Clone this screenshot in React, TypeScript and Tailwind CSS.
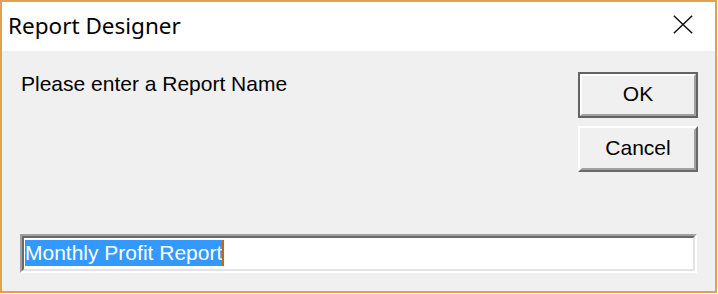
import React from "react";

export default function App() {
  const sans = { fontFamily: '"Liberation Sans", Arial, sans-serif' };
  return (
    <div className="w-[718px] h-[294px] bg-white">
      <div className="w-[717px] h-[293px] border-2 border-[#e3a14f] flex flex-col bg-[#f0f0f0]">
        {/* Title bar */}
        <div className="h-[49px] bg-white flex items-start justify-between">
          <div
            className="pt-[9px] pl-[6px] text-[22.5px] leading-[30px] text-black"
            style={{ fontFamily: '"Noto Sans", "Open Sans", sans-serif' }}
          >
            Report Designer
          </div>
          <svg
            width="20"
            height="19"
            viewBox="0 0 20 19"
            className="mt-[13px] mr-[22px]"
          >
            <path d="M0.8 0.8 L19.2 18.2 M19.2 0.8 L0.8 18.2" stroke="#111" strokeWidth="1.5" fill="none" />
          </svg>
        </div>

        {/* Body */}
        <div className="flex-1 flex flex-col" style={sans}>
          <div className="flex justify-between pt-[21px] pl-[19px] pr-[17px]">
            <div className="text-[21px] leading-[24px] text-black">Please enter a Report Name</div>
            <div className="flex flex-col gap-[8px]">
              {/* OK (default) */}
              <div className="w-[120px] h-[46px] border-2 border-[#646464]">
                <div className="w-full h-full border-t-2 border-l-2 border-r-2 border-b-2 border-t-white border-l-white border-r-[#a0a0a0] border-b-[#a0a0a0] flex items-center justify-center pb-[2px] text-[21px] leading-[24px] text-black">
                  OK
                </div>
              </div>
              {/* Cancel */}
              <div className="w-[120px] h-[46px] border-t-2 border-l-2 border-r-2 border-b-2 border-t-white border-l-white border-r-[#696969] border-b-[#696969]">
                <div className="w-full h-full border-t-2 border-l-2 border-r-2 border-b-2 border-t-[#f0f0f0] border-l-[#f0f0f0] border-r-[#a0a0a0] border-b-[#a0a0a0] flex items-center justify-center pb-[3px] text-[21px] leading-[24px] text-black">
                  Cancel
                </div>
              </div>
            </div>
          </div>

          {/* Text box */}
          <div className="mt-auto mx-[18px] mb-[18px] h-[39px] border-t-2 border-l-2 border-r-2 border-b-2 border-t-[#a0a0a0] border-l-[#a0a0a0] border-r-white border-b-white">
            <div className="w-full h-full bg-white border-t-2 border-l-2 border-r-2 border-b-2 border-t-[#696969] border-l-[#696969] border-r-[#e3e3e3] border-b-[#e3e3e3] pt-[2px] pl-[1px] flex items-start">
              <span className="inline-block h-[26px] leading-[26px] bg-[#3399ff] text-white text-[21px] whitespace-nowrap">
                Monthly Profit Report
              </span>
              <span className="inline-block w-[2px] h-[26px] bg-[#c8640a]" />
            </div>
          </div>
        </div>
      </div>
    </div>
  );
}
